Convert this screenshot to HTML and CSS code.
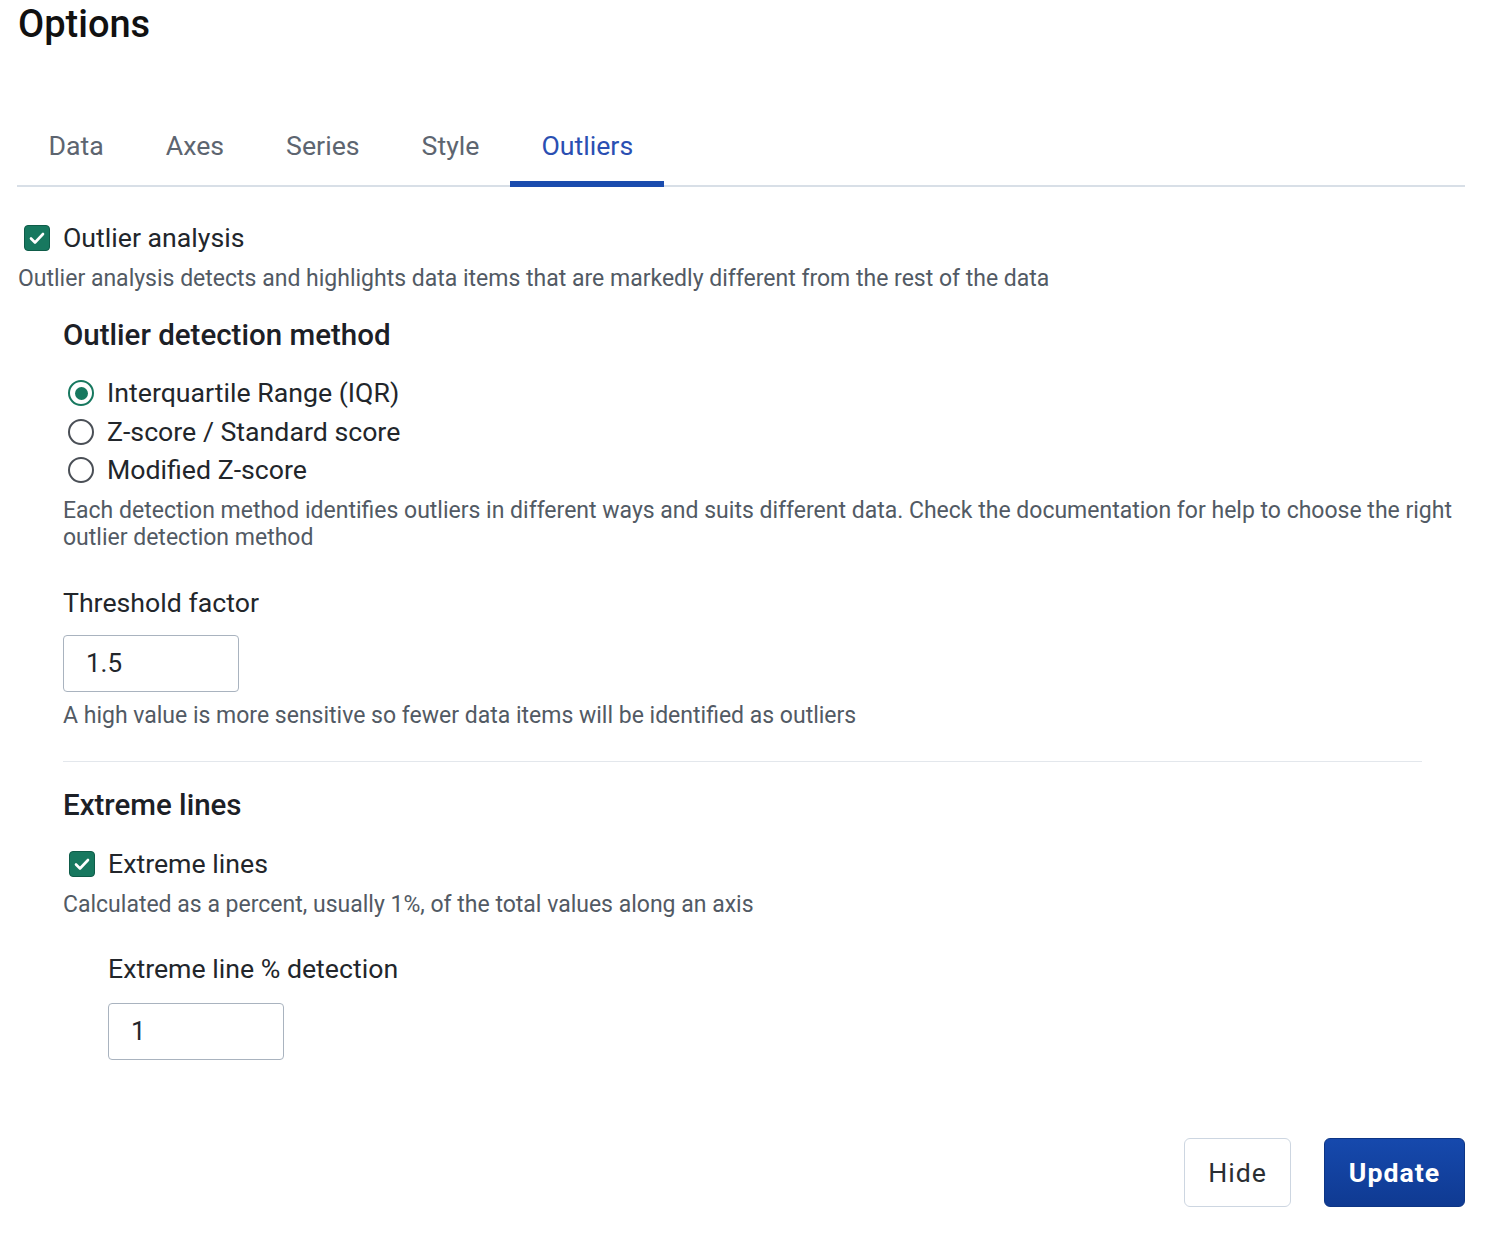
FILE: index.html
```html
<!DOCTYPE html>
<html lang="en">
<head>
<meta charset="utf-8">
<title>Options</title>
<link rel="stylesheet" href="styles.css">
</head>
<body>
<div class="page">
  <h1 class="title">Options</h1>

  <div class="tabs">
    <div class="tab">Data</div>
    <div class="tab">Axes</div>
    <div class="tab">Series</div>
    <div class="tab">Style</div>
    <div class="tab active">Outliers</div>
  </div>

  <div class="check-row first">
    <span class="checkbox"><svg viewBox="0 0 26 26" width="26" height="26"><path d="M7 13.5l4 4 8-8.5" fill="none" stroke="#fff" stroke-width="2.6" stroke-linecap="round" stroke-linejoin="round"/></svg></span>
    <span class="label">Outlier analysis</span>
  </div>
  <p class="desc desc-top">Outlier analysis detects and highlights data items that are markedly different from the rest of the data</p>

  <div class="section">
    <h2 class="heading h-method">Outlier detection method</h2>
    <div class="radios">
      <div class="radio-row"><span class="radio checked"><span class="dot"></span></span><span class="label">Interquartile Range (IQR)</span></div>
      <div class="radio-row"><span class="radio"></span><span class="label">Z-score / Standard score</span></div>
      <div class="radio-row"><span class="radio"></span><span class="label">Modified Z-score</span></div>
    </div>
    <p class="desc desc-method">Each detection method identifies outliers in different ways and suits different data. Check the documentation for help to choose the right outlier detection method</p>

    <div class="field-label fl-threshold">Threshold factor</div>
    <div class="input">1.5</div>
    <p class="desc desc-hint">A high value is more sensitive so fewer data items will be identified as outliers</p>

    <hr class="divider">

    <h2 class="heading h-extreme">Extreme lines</h2>
    <div class="check-row inner">
      <span class="checkbox"><svg viewBox="0 0 26 26" width="26" height="26"><path d="M7 13.5l4 4 8-8.5" fill="none" stroke="#fff" stroke-width="2.6" stroke-linecap="round" stroke-linejoin="round"/></svg></span>
      <span class="label">Extreme lines</span>
    </div>
    <p class="desc desc-calc">Calculated as a percent, usually 1%, of the total values along an axis</p>

    <div class="sub">
      <div class="field-label fl-extreme">Extreme line % detection</div>
      <div class="input">1</div>
    </div>
  </div>

  <div class="actions">
    <button class="btn btn-hide">Hide</button>
    <button class="btn btn-update">Update</button>
  </div>
</div>
</body>
</html>
```

FILE: styles.css
```css
* { box-sizing: border-box; }

html, body {
  margin: 0;
  padding: 0;
  background: #ffffff;
}

body {
  font-family: Roboto, "Liberation Sans", sans-serif;
  color: #1f2328;
}

.page {
  width: 1465px;
  padding-left: 18px;
}

.title {
  margin: 0 0 68px 0;
  font-size: 38px;
  line-height: 48px;
  font-weight: 500;
  color: #111;
}

.tabs {
  display: flex;
  margin-left: -1px;
  border-bottom: 2px solid #d8dfe7;
}

.tab {
  padding: 14px 31px 19px;
  font-size: 26.7px;
  line-height: 32px;
  color: #5d6570;
  border-bottom: 6px solid transparent;
  margin-bottom: -2px;
}

.tab:first-child { padding-left: 31.5px; }

.tab.active {
  color: #2a4fb2;
  border-bottom-color: #1a4cae;
}

.check-row {
  display: flex;
  align-items: center;
  height: 32px;
  gap: 13px;
}

.check-row.first { margin-top: 35px; margin-left: 6px; }
.check-row.inner { margin-top: 25px; margin-left: 6px; }

.checkbox {
  width: 26px;
  height: 26px;
  border-radius: 4px;
  background: #17785f;
  border: 1px solid #0f5c49;
  display: flex;
  align-items: center;
  justify-content: center;
  flex: none;
}

.checkbox svg { display: block; margin: -1px; }

.label {
  font-size: 26.7px;
  line-height: 32px;
  color: #22262b;
}

.desc {
  margin: 0;
  font-size: 23px;
  line-height: 27px;
  color: #525a64;
}

.desc-top { margin-top: 11px; }

.section {
  padding-left: 45px;
}

.heading {
  margin: 0;
  font-size: 29.5px;
  line-height: 36px;
  font-weight: 500;
  color: #1c2026;
}

.h-method { margin-top: 25px; }
.h-extreme { margin-top: 25px; }

.radios {
  margin-top: 24px;
  margin-left: 5px;
  display: flex;
  flex-direction: column;
  gap: 6.5px;
}

.radio-row {
  display: flex;
  align-items: center;
  gap: 13px;
  height: 32px;
}

.radio {
  width: 26px;
  height: 26px;
  border-radius: 50%;
  border: 2px solid #4a4f56;
  flex: none;
  display: flex;
  align-items: center;
  justify-content: center;
}

.radio.checked {
  border: 2.5px solid #17785f;
}

.radio .dot {
  width: 13px;
  height: 13px;
  border-radius: 50%;
  background: #17785f;
}

.desc-method { margin-top: 10.5px; }

.field-label {
  font-size: 26.7px;
  line-height: 32px;
  color: #22262b;
}

.fl-threshold { margin-top: 36px; margin-bottom: 16px; }

.input {
  width: 176px;
  height: 57px;
  border: 1.5px solid #a9b3bf;
  border-radius: 4px;
  padding-left: 22px;
  font-size: 26px;
  line-height: 54px;
  color: #22262b;
}

.desc-hint { margin-top: 10px; }

.divider {
  margin: 32px 0 0 0;
  width: 1359px;
  border: 0;
  border-top: 1.5px solid #e3e7ec;
  height: 0;
}

.desc-calc { margin-top: 11.5px; }

.sub {
  padding-left: 45px;
}

.fl-extreme { margin-top: 35px; margin-bottom: 18px; }

.actions {
  display: flex;
  justify-content: flex-end;
  gap: 33px;
  margin-top: 78px;
}

.btn {
  height: 69px;
  border-radius: 6px;
  font-family: Roboto, "Liberation Sans", sans-serif;
  font-size: 26.7px;
  letter-spacing: 1px;
  cursor: pointer;
}

.btn-hide {
  width: 107px;
  background: #fff;
  border: 1.5px solid #cdd6e1;
  color: #2a2e33;
}

.btn-update {
  width: 141px;
  background: linear-gradient(#1649ad, #0f3a92);
  border: 1px solid #0d3585;
  color: #fff;
  font-weight: 700;
}
```
